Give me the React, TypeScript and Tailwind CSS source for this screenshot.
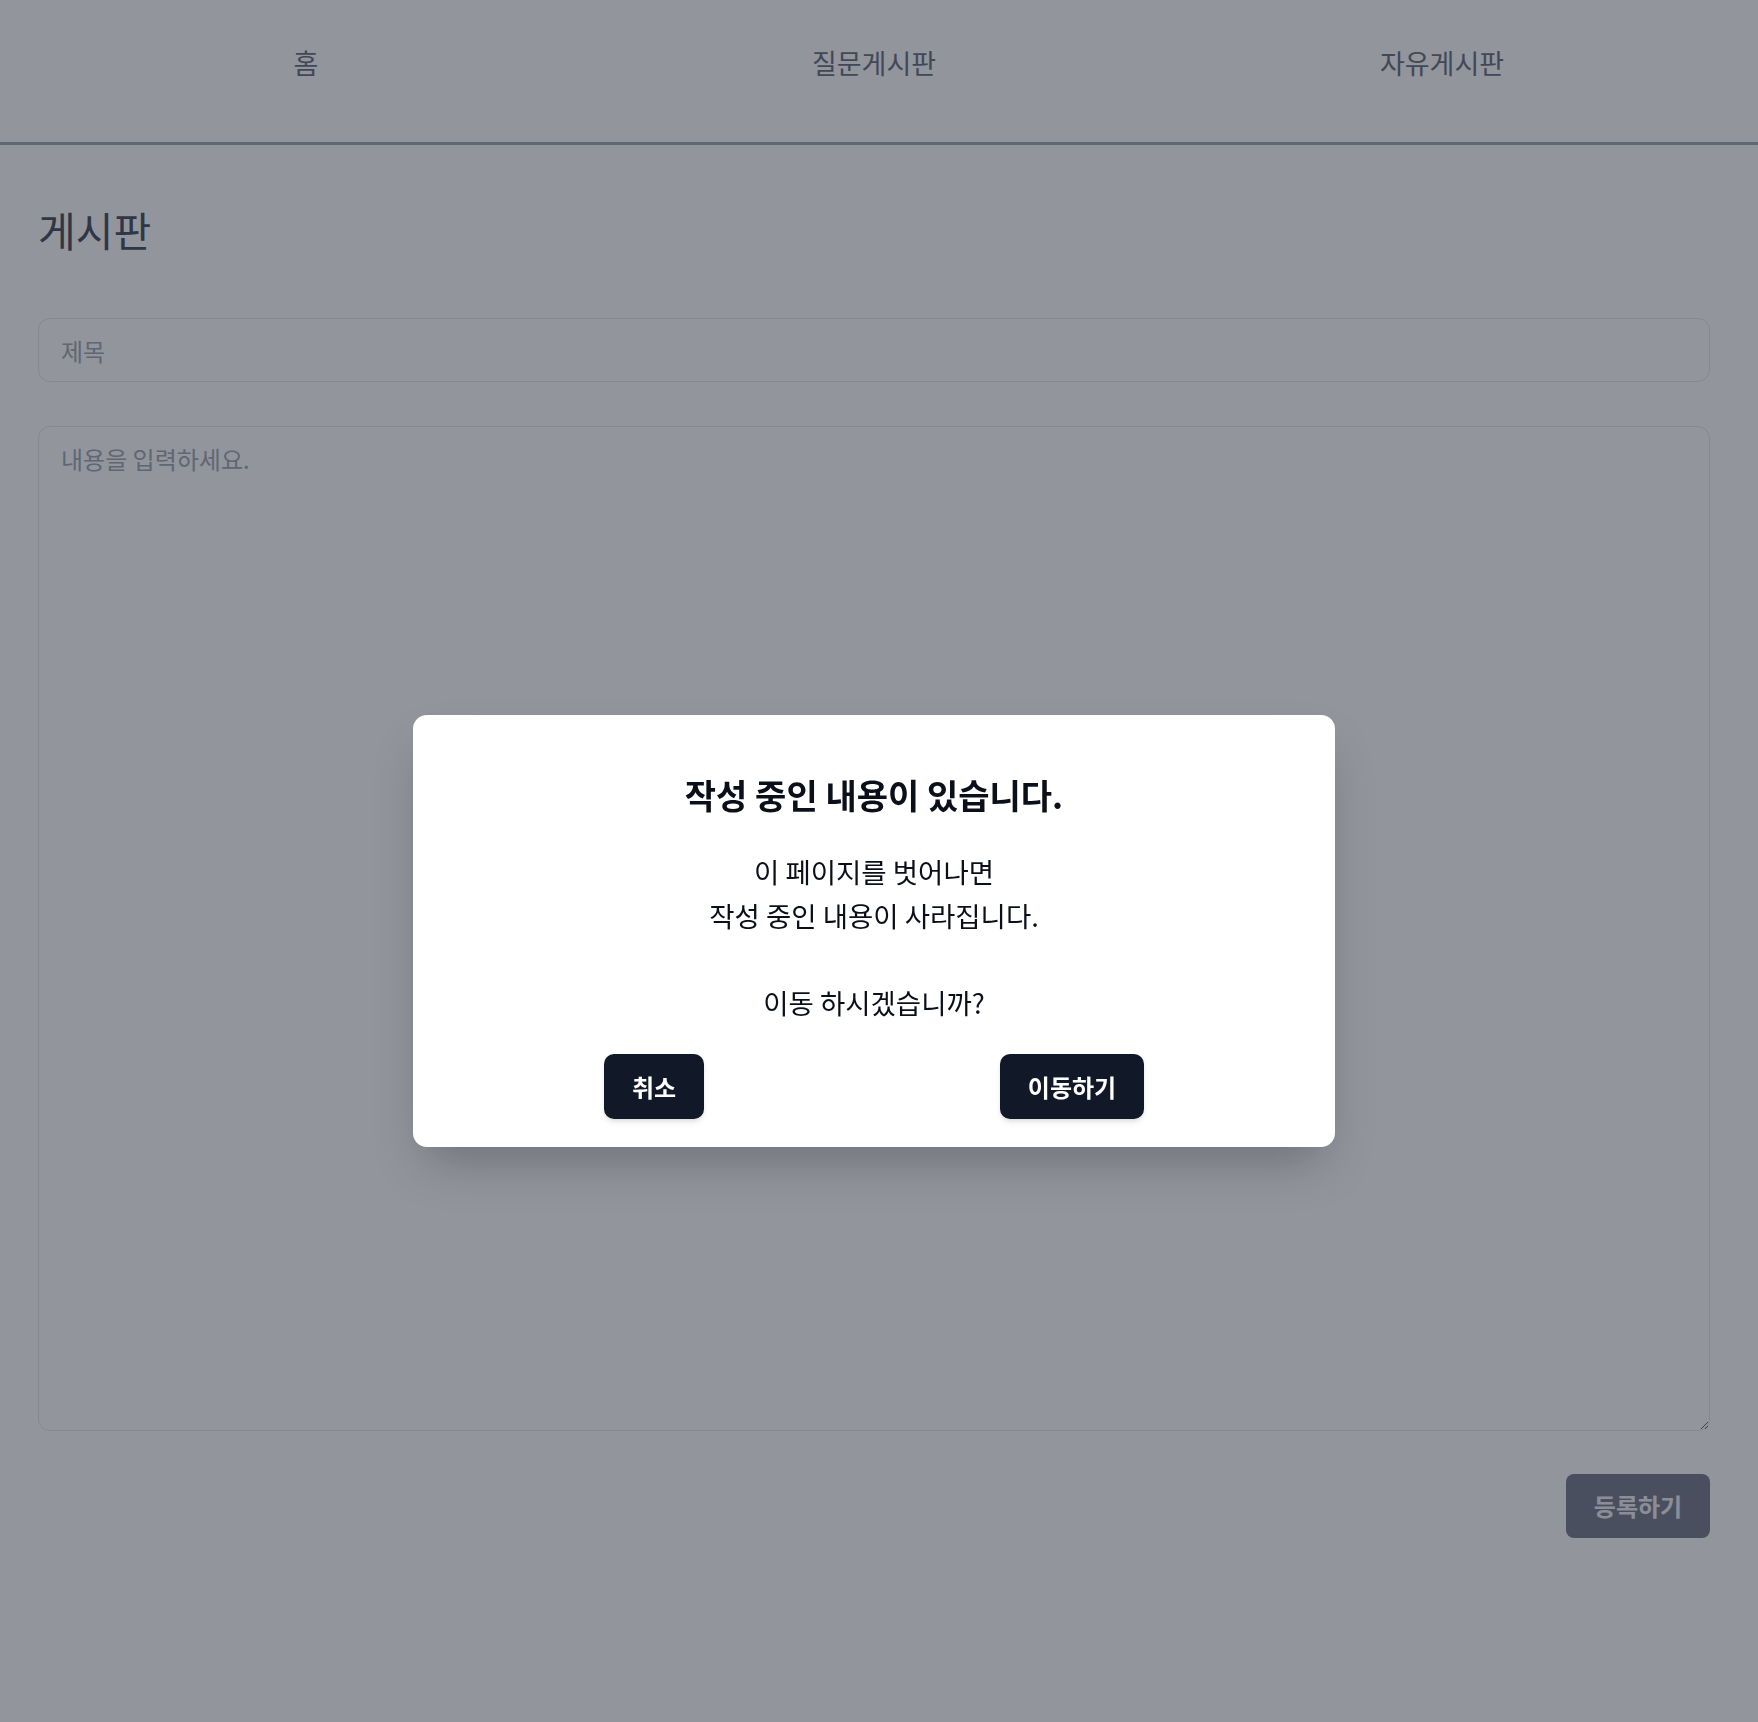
import React from "react";

const FONT = { fontFamily: '"Noto Sans CJK KR", "Noto Sans", sans-serif' };

export default function App() {
  return (
    <div className="relative min-h-screen bg-white" style={FONT}>
      <nav className="border-b-[3px] border-[#a3a8b4]">
        <div className="grid h-[142px] grid-cols-3 items-start px-[22px] pr-[32px] pt-[44px] text-[27px] leading-[38px] text-[#6b7280]">
          <div className="text-center">홈</div>
          <div className="text-center">질문게시판</div>
          <div className="text-center">자유게시판</div>
        </div>
      </nav>

      <main className="pl-[38px] pr-[48px]">
        <h1 className="mt-[56px] text-[41px] leading-[56px] text-[#4b5060]">게시판</h1>

        <input
          className="mt-[61px] block h-[64px] w-full rounded-xl border border-[#e5e7eb] px-[22px] text-[24px] outline-none placeholder:text-[#a4a9b5]"
          placeholder="제목"
        />

        <textarea
          className="mt-[44px] block h-[1005px] w-full rounded-xl border border-[#e5e7eb] px-[22px] py-[14px] text-[24px] outline-none placeholder:text-[#a4a9b5]"
          placeholder="내용을 입력하세요."
        />

        <div className="mt-[43px] flex justify-end">
          <button className="h-[64px] w-[144px] rounded-lg bg-[#7a7f8e] text-[24px] font-semibold text-[#f2f3f6]">
            등록하기
          </button>
        </div>
      </main>

      <div className="fixed inset-0 flex items-start justify-center bg-[rgba(17,24,39,0.46)] pr-[10px] pt-[715px]">
        <div className="w-[922px] rounded-[14px] bg-white px-[43px] pb-[28px] pt-[62px] text-center text-[#0b0f19] shadow-2xl">
          <h2 className="text-[34px] font-bold leading-[36px]">작성 중인 내용이 있습니다.</h2>
          <p className="mt-[37px] text-[27.5px] leading-[43.5px]">
            이 페이지를 벗어나면
            <br />
            작성 중인 내용이 사라집니다.
            <br />
            <br />
            이동 하시겠습니까?
          </p>
          <div className="mt-[30px] flex justify-around">
            <button className="h-[65px] rounded-[10px] bg-[#111827] px-[28px] text-[24px] font-bold text-white shadow-md">
              취소
            </button>
            <button className="h-[65px] rounded-[10px] bg-[#111827] px-[28px] text-[24px] font-bold text-white shadow-md">
              이동하기
            </button>
          </div>
        </div>
      </div>
    </div>
  );
}
